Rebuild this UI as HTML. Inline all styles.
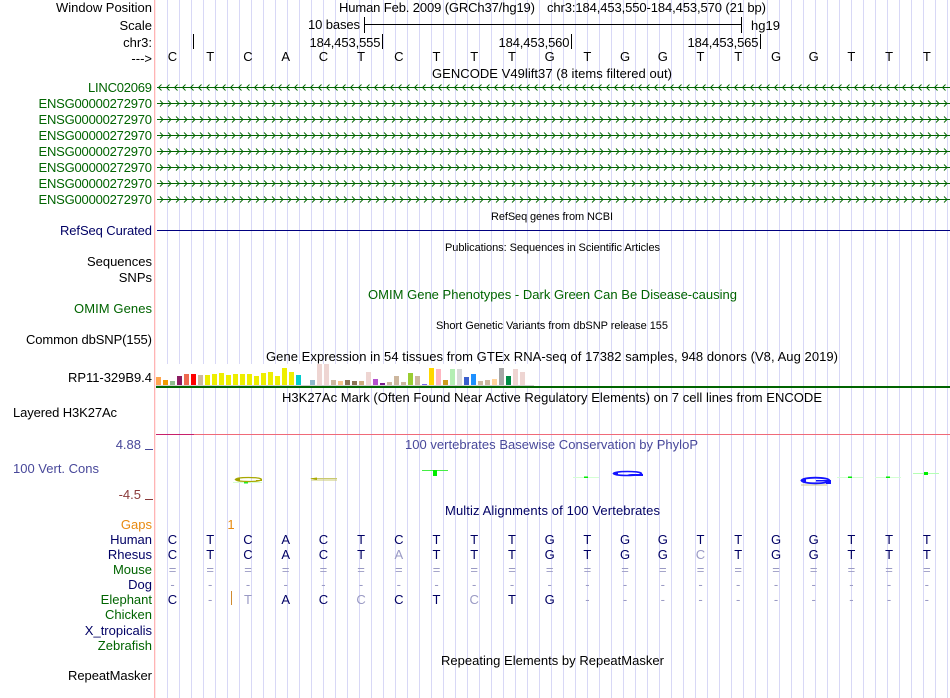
<!DOCTYPE html>
<html><head><meta charset="utf-8"><style>
html,body{margin:0;padding:0;background:#fff;width:950px;height:698px;overflow:hidden}
svg{display:block}
text{font-family:"Liberation Sans",Arial,sans-serif;font-size:13px;fill:#000}
.r{text-anchor:end}
.g{fill:#006400}.n{fill:#000064}.p{fill:#48489a}.l{fill:#9a9ac4}.m{text-anchor:middle}
.s{font-size:11px}
.b{text-anchor:middle;font-size:13px}
</style></head><body>
<svg width="950" height="698" viewBox="0 0 950 698" xmlns="http://www.w3.org/2000/svg">
<defs>
<pattern id="grid" x="167" y="0" width="12" height="698" patternUnits="userSpaceOnUse"><rect x="0" y="0" width="1" height="698" fill="#d8d8f6"/></pattern>
<pattern id="cl" x="157" y="3.5" width="8" height="8" patternUnits="userSpaceOnUse"><path d="M4.500 1 L1.500 4 L4.500 7" fill="none" stroke="#006400" stroke-width="0.900"/></pattern>
<pattern id="cr" x="157" y="3.5" width="8" height="8" patternUnits="userSpaceOnUse"><path d="M3 1 L6 4 L3 7" fill="none" stroke="#006400" stroke-width="0.900"/></pattern>
</defs>
<rect width="950" height="698" fill="#fff"/>
<rect x="160" y="0" width="790" height="698" fill="url(#grid)"/>
<rect x="154" y="0" width="1.300" height="698" fill="#ffb4b4"/>

<text class="r" x="152" y="12" textLength="96">Window Position</text>
<text class="r" x="152" y="30">Scale</text>
<text class="r" x="152" y="47">chr3:</text>
<text class="r" x="152" y="63">---&gt;</text>
<text class="g" x="88" y="92" textLength="64">LINC02069</text>
<text class="g" x="38.500" y="108" textLength="113.500">ENSG00000272970</text>
<text class="g" x="38.500" y="124" textLength="113.500">ENSG00000272970</text>
<text class="g" x="38.500" y="140" textLength="113.500">ENSG00000272970</text>
<text class="g" x="38.500" y="156" textLength="113.500">ENSG00000272970</text>
<text class="g" x="38.500" y="172" textLength="113.500">ENSG00000272970</text>
<text class="g" x="38.500" y="188" textLength="113.500">ENSG00000272970</text>
<text class="g" x="38.500" y="204" textLength="113.500">ENSG00000272970</text>
<text class="n" x="60" y="235" textLength="92">RefSeq Curated</text>
<text class="r" x="152" y="266">Sequences</text>
<text class="r" x="152" y="282">SNPs</text>
<text class="g" x="74" y="313" textLength="78">OMIM Genes</text>
<text x="26" y="344" textLength="126">Common dbSNP(155)</text>
<text x="68" y="382" textLength="84">RP11-329B9.4</text>
<text x="13" y="417" textLength="104">Layered H3K27Ac</text>
<text class="r p" x="141" y="449">4.88</text>
<rect x="145" y="449" width="8" height="1" fill="#48489a"/>
<text class="p" x="13" y="473" textLength="86">100 Vert. Cons</text>
<text class="r" x="141" y="499" style="fill:#8a3a3a">-4.5</text>
<rect x="145" y="499" width="8" height="1" fill="#8a3a3a"/>
<text class="r" x="152" y="529" style="fill:#e88a10">Gaps</text>
<text class="r n" x="152" y="544">Human</text>
<text class="r n" x="152" y="559">Rhesus</text>
<text class="r g" x="152" y="574">Mouse</text>
<text class="r n" x="152" y="589">Dog</text>
<text class="r g" x="152" y="604">Elephant</text>
<text class="r g" x="152" y="619">Chicken</text>
<text class="r n" x="152" y="635">X_tropicalis</text>
<text class="r g" x="152" y="650">Zebrafish</text>
<text x="68" y="680" textLength="84">RepeatMasker</text>

<text x="339" y="12" textLength="196">Human Feb. 2009 (GRCh37/hg19)</text>
<text x="547" y="12" textLength="219">chr3:184,453,550-184,453,570 (21 bp)</text>
<text x="308" y="29" textLength="52">10 bases</text>
<rect x="364" y="24" width="378" height="1" fill="#000"/>
<rect x="364" y="17" width="1" height="16" fill="#000"/>
<rect x="741" y="17" width="1" height="16" fill="#000"/>
<text x="751" y="30" textLength="29">hg19</text>
<rect x="193" y="34" width="1" height="15" fill="#000"/>
<rect x="382" y="34" width="1" height="15" fill="#000"/>
<rect x="571" y="34" width="1" height="15" fill="#000"/>
<rect x="760" y="34" width="1" height="15" fill="#000"/>
<text x="309.500" y="47" textLength="71">184,453,555</text>
<text x="498.500" y="47" textLength="71">184,453,560</text>
<text x="687.500" y="47" textLength="71">184,453,565</text>

<g>
<text class="b" x="172.500" y="61">C</text><text class="b" x="210.200" y="61">T</text><text class="b" x="248" y="61">C</text><text class="b" x="285.700" y="61">A</text><text class="b" x="323.400" y="61">C</text><text class="b" x="361.100" y="61">T</text><text class="b" x="398.800" y="61">C</text><text class="b" x="436.500" y="61">T</text><text class="b" x="474.200" y="61">T</text><text class="b" x="512" y="61">T</text><text class="b" x="549.700" y="61">G</text><text class="b" x="587.400" y="61">T</text><text class="b" x="625.100" y="61">G</text><text class="b" x="662.800" y="61">G</text><text class="b" x="700.500" y="61">T</text><text class="b" x="738.200" y="61">T</text><text class="b" x="776" y="61">G</text><text class="b" x="813.700" y="61">G</text><text class="b" x="851.400" y="61">T</text><text class="b" x="889.100" y="61">T</text><text class="b" x="926.800" y="61">T</text>
</g>
<text x="432" y="78" textLength="240">GENCODE V49lift37 (8 items filtered out)</text>

<g fill="#006400">
<rect x="157" y="87" width="793" height="1"/><rect x="157" y="103" width="793" height="1"/><rect x="157" y="119" width="793" height="1"/><rect x="157" y="135" width="793" height="1"/><rect x="157" y="151" width="793" height="1"/><rect x="157" y="167" width="793" height="1"/><rect x="157" y="183" width="793" height="1"/><rect x="157" y="199" width="793" height="1"/>
</g>
<rect x="157" y="83.500" width="793" height="8" fill="url(#cl)"/>
<rect x="157" y="99.500" width="793" height="8" fill="url(#cr)"/>
<rect x="157" y="115.500" width="793" height="8" fill="url(#cr)"/>
<rect x="157" y="131.500" width="793" height="8" fill="url(#cr)"/>
<rect x="157" y="147.500" width="793" height="8" fill="url(#cr)"/>
<rect x="157" y="163.500" width="793" height="8" fill="url(#cr)"/>
<rect x="157" y="179.500" width="793" height="8" fill="url(#cr)"/>
<rect x="157" y="195.500" width="793" height="8" fill="url(#cr)"/>

<text class="s" x="491" y="220" textLength="122">RefSeq genes from NCBI</text>
<rect x="157" y="230" width="793" height="1" fill="#000080"/>
<text class="s" x="445" y="251" textLength="215">Publications: Sequences in Scientific Articles</text>
<text class="g" x="368" y="299" textLength="369">OMIM Gene Phenotypes - Dark Green Can Be Disease-causing</text>
<text class="s" x="436" y="329" textLength="232">Short Genetic Variants from dbSNP release 155</text>

<!-- GTEx bars -->
<rect x="156" y="364" width="378" height="22" fill="#fff"/>
<text x="266" y="361" textLength="572">Gene Expression in 54 tissues from GTEx RNA-seq of 17382 samples, 948 donors (V8, Aug 2019)</text>
<g>
<rect x="156" y="377" width="5" height="8" fill="#ffa54f"/><rect x="163" y="380" width="5" height="5" fill="#ee9a00"/><rect x="170" y="381" width="5" height="4" fill="#8fbc8f"/><rect x="177" y="376" width="5" height="9" fill="#8b1c62"/><rect x="184" y="374" width="5" height="11" fill="#ee6a50"/><rect x="191" y="374" width="5" height="11" fill="#ff0000"/><rect x="198" y="375" width="5" height="10" fill="#cdb79e"/>
<rect x="205" y="375" width="5" height="10" fill="#eeee00"/><rect x="212" y="374" width="5" height="11" fill="#eeee00"/><rect x="219" y="373" width="5" height="12" fill="#eeee00"/><rect x="226" y="375" width="5" height="10" fill="#eeee00"/><rect x="233" y="374" width="5" height="11" fill="#eeee00"/><rect x="240" y="374" width="5" height="11" fill="#eeee00"/><rect x="247" y="374" width="5" height="11" fill="#eeee00"/><rect x="254" y="376" width="5" height="9" fill="#eeee00"/><rect x="261" y="373" width="5" height="12" fill="#eeee00"/><rect x="268" y="372" width="5" height="13" fill="#eeee00"/><rect x="275" y="376" width="5" height="9" fill="#eeee00"/><rect x="282" y="368" width="5" height="17" fill="#eeee00"/><rect x="289" y="372" width="5" height="13" fill="#eeee00"/>
<rect x="296" y="375" width="5" height="10" fill="#00cdcd"/><rect x="310" y="380" width="5" height="5" fill="#8fb9cc"/><rect x="317" y="364" width="5" height="21" fill="#eed5d2"/><rect x="324" y="364" width="5" height="21" fill="#eed5d2"/><rect x="331" y="380" width="5" height="5" fill="#cdb79e"/><rect x="338" y="381" width="5" height="4" fill="#f4c28a"/><rect x="345" y="380" width="5" height="5" fill="#8b7355"/><rect x="352" y="381" width="5" height="4" fill="#8b7355"/><rect x="359" y="381" width="5" height="4" fill="#cdaa7d"/><rect x="366" y="372" width="5" height="13" fill="#eed5d2"/><rect x="373" y="379" width="5" height="6" fill="#b452cd"/><rect x="380" y="383" width="5" height="2" fill="#7a1f8f"/><rect x="387" y="382" width="5" height="3" fill="#cdb79e"/><rect x="394" y="376" width="5" height="9" fill="#cdb79e"/><rect x="401" y="382" width="5" height="3" fill="#cdb79e"/><rect x="408" y="373" width="5" height="12" fill="#9acd32"/><rect x="415" y="376" width="5" height="9" fill="#cdb79e"/><rect x="422" y="384" width="5" height="1" fill="#7a67ee"/><rect x="429" y="368" width="5" height="17" fill="#ffd700"/><rect x="436" y="369" width="5" height="16" fill="#ffb6c1"/><rect x="443" y="380" width="5" height="5" fill="#cd9b1d"/><rect x="450" y="369" width="5" height="16" fill="#b4eeb4"/><rect x="457" y="369" width="5" height="16" fill="#d9d9d9"/><rect x="464" y="377" width="5" height="8" fill="#3a5fcd"/><rect x="471" y="374" width="5" height="11" fill="#1e90ff"/><rect x="478" y="381" width="5" height="4" fill="#cdb79e"/><rect x="485" y="380" width="5" height="5" fill="#cdb79e"/><rect x="492" y="379" width="5" height="6" fill="#ffd39b"/><rect x="499" y="368" width="5" height="17" fill="#a6a6a6"/><rect x="506" y="376" width="5" height="9" fill="#008b45"/><rect x="513" y="369" width="5" height="16" fill="#eed5d2"/><rect x="520" y="372" width="5" height="13" fill="#eed5d2"/>
</g>
<rect x="156" y="385" width="378" height="1" fill="#d0d0d0"/>
<rect x="156" y="386" width="794" height="2" fill="#006400"/>

<text x="282" y="402" textLength="540">H3K27Ac Mark (Often Found Near Active Regulatory Elements) on 7 cell lines from ENCODE</text>
<rect x="156" y="434" width="794" height="1" fill="#f06a78"/>
<rect x="156" y="434" width="38" height="1" fill="#c8206a"/>

<text class="p" x="405" y="449" textLength="293">100 vertebrates Basewise Conservation by PhyloP</text>

<!-- conservation logos -->
<g fill="none">
<rect x="233" y="482" width="29" height="1" fill="#d4ffd4"/><rect x="244" y="482" width="4" height="1.500" fill="#22ee22"/>
<ellipse cx="248.500" cy="479.500" rx="13" ry="2" stroke="#a8a800" stroke-width="1.200"/>
<path d="M234 479.500 L240 478 V481Z" fill="#a0a000"/><path d="M256 480 H262 V481 H256Z" fill="#a8a800"/>
<path d="M311 478.500 H337 M311 480 H337" stroke="#c8c870" stroke-width="1"/><path d="M310 478.500 L317 477.500 V480Z" fill="#a8a800"/>
<rect x="422" y="470" width="26" height="1" fill="#44ee44"/><rect x="433" y="470" width="4" height="6" fill="#00ee00"/>
<rect x="573" y="477" width="26" height="1" fill="#d4ffd4"/><rect x="584" y="476.500" width="4" height="1.500" fill="#00ee00"/>
<ellipse cx="627.500" cy="473.500" rx="14" ry="2" stroke="#1414ff" stroke-width="1.500"/>
<path d="M627 474 H643 V476 H637Z" fill="#1414ff"/><path d="M612 473.500 L618 472 V475Z" fill="#1414ff"/>
<ellipse cx="815.500" cy="480.500" rx="14" ry="2.800" stroke="#1414ff" stroke-width="1.800"/>
<path d="M816 480 H831 V484 H826 V481.500 H816Z" fill="#1414ff"/><path d="M800 480.500 L806 478.500 V482.500Z" fill="#1414ff"/>
<rect x="801" y="484.500" width="26" height="1" fill="#c8c890"/>
<rect x="837" y="477" width="26" height="1" fill="#d4ffd4"/><rect x="848" y="476.500" width="4" height="1.500" fill="#00ee00"/>
<rect x="875" y="477" width="26" height="1" fill="#d4ffd4"/><rect x="886" y="476.500" width="4" height="1.500" fill="#00ee00"/>
<rect x="913" y="473" width="26" height="1" fill="#b4ffb4"/><rect x="924" y="472" width="4" height="3" fill="#00ee00"/>
</g>

<text class="n" x="445" y="515" textLength="215">Multiz Alignments of 100 Vertebrates</text>
<text class="m" x="231" y="529" style="fill:#e88a10">1</text>

<!-- Human -->
<text class="b n" x="172.500" y="544">C</text><text class="b n" x="210.200" y="544">T</text><text class="b n" x="248" y="544">C</text><text class="b n" x="285.700" y="544">A</text><text class="b n" x="323.400" y="544">C</text><text class="b n" x="361.100" y="544">T</text><text class="b n" x="398.800" y="544">C</text><text class="b n" x="436.500" y="544">T</text><text class="b n" x="474.200" y="544">T</text><text class="b n" x="512" y="544">T</text><text class="b n" x="549.700" y="544">G</text><text class="b n" x="587.400" y="544">T</text><text class="b n" x="625.100" y="544">G</text><text class="b n" x="662.800" y="544">G</text><text class="b n" x="700.500" y="544">T</text><text class="b n" x="738.200" y="544">T</text><text class="b n" x="776" y="544">G</text><text class="b n" x="813.700" y="544">G</text><text class="b n" x="851.400" y="544">T</text><text class="b n" x="889.100" y="544">T</text><text class="b n" x="926.800" y="544">T</text>
<!-- Rhesus -->
<text class="b n" x="172.500" y="559">C</text><text class="b n" x="210.200" y="559">T</text><text class="b n" x="248" y="559">C</text><text class="b n" x="285.700" y="559">A</text><text class="b n" x="323.400" y="559">C</text><text class="b n" x="361.100" y="559">T</text><text class="b l" x="398.800" y="559">A</text><text class="b n" x="436.500" y="559">T</text><text class="b n" x="474.200" y="559">T</text><text class="b n" x="512" y="559">T</text><text class="b n" x="549.700" y="559">G</text><text class="b n" x="587.400" y="559">T</text><text class="b n" x="625.100" y="559">G</text><text class="b n" x="662.800" y="559">G</text><text class="b l" x="700.500" y="559">C</text><text class="b n" x="738.200" y="559">T</text><text class="b n" x="776" y="559">G</text><text class="b n" x="813.700" y="559">G</text><text class="b n" x="851.400" y="559">T</text><text class="b n" x="889.100" y="559">T</text><text class="b n" x="926.800" y="559">T</text>
<!-- Mouse -->
<text class="b l" x="172.500" y="574">=</text><text class="b l" x="210.200" y="574">=</text><text class="b l" x="248" y="574">=</text><text class="b l" x="285.700" y="574">=</text><text class="b l" x="323.400" y="574">=</text><text class="b l" x="361.100" y="574">=</text><text class="b l" x="398.800" y="574">=</text><text class="b l" x="436.500" y="574">=</text><text class="b l" x="474.200" y="574">=</text><text class="b l" x="512" y="574">=</text><text class="b l" x="549.700" y="574">=</text><text class="b l" x="587.400" y="574">=</text><text class="b l" x="625.100" y="574">=</text><text class="b l" x="662.800" y="574">=</text><text class="b l" x="700.500" y="574">=</text><text class="b l" x="738.200" y="574">=</text><text class="b l" x="776" y="574">=</text><text class="b l" x="813.700" y="574">=</text><text class="b l" x="851.400" y="574">=</text><text class="b l" x="889.100" y="574">=</text><text class="b l" x="926.800" y="574">=</text>
<!-- Dog -->
<text class="b l" x="172.500" y="589">-</text><text class="b l" x="210.200" y="589">-</text><text class="b l" x="248" y="589">-</text><text class="b l" x="285.700" y="589">-</text><text class="b l" x="323.400" y="589">-</text><text class="b l" x="361.100" y="589">-</text><text class="b l" x="398.800" y="589">-</text><text class="b l" x="436.500" y="589">-</text><text class="b l" x="474.200" y="589">-</text><text class="b l" x="512" y="589">-</text><text class="b l" x="549.700" y="589">-</text><text class="b l" x="587.400" y="589">-</text><text class="b l" x="625.100" y="589">-</text><text class="b l" x="662.800" y="589">-</text><text class="b l" x="700.500" y="589">-</text><text class="b l" x="738.200" y="589">-</text><text class="b l" x="776" y="589">-</text><text class="b l" x="813.700" y="589">-</text><text class="b l" x="851.400" y="589">-</text><text class="b l" x="889.100" y="589">-</text><text class="b l" x="926.800" y="589">-</text>
<!-- Elephant -->
<text class="b n" x="172.500" y="604">C</text><text class="b l" x="210.200" y="604">-</text><rect x="231" y="591" width="1" height="14" fill="#d08a30"/><text class="b l" x="248" y="604">T</text><text class="b n" x="285.700" y="604">A</text><text class="b n" x="323.400" y="604">C</text><text class="b l" x="361.100" y="604">C</text><text class="b n" x="398.800" y="604">C</text><text class="b n" x="436.500" y="604">T</text><text class="b l" x="474.200" y="604">C</text><text class="b n" x="512" y="604">T</text><text class="b n" x="549.700" y="604">G</text><text class="b l" x="587.400" y="604">-</text><text class="b l" x="625.100" y="604">-</text><text class="b l" x="662.800" y="604">-</text><text class="b l" x="700.500" y="604">-</text><text class="b l" x="738.200" y="604">-</text><text class="b l" x="776" y="604">-</text><text class="b l" x="813.700" y="604">-</text><text class="b l" x="851.400" y="604">-</text><text class="b l" x="889.100" y="604">-</text><text class="b l" x="926.800" y="604">-</text>

<text x="441" y="665" textLength="223">Repeating Elements by RepeatMasker</text>
</svg>
</body></html>
